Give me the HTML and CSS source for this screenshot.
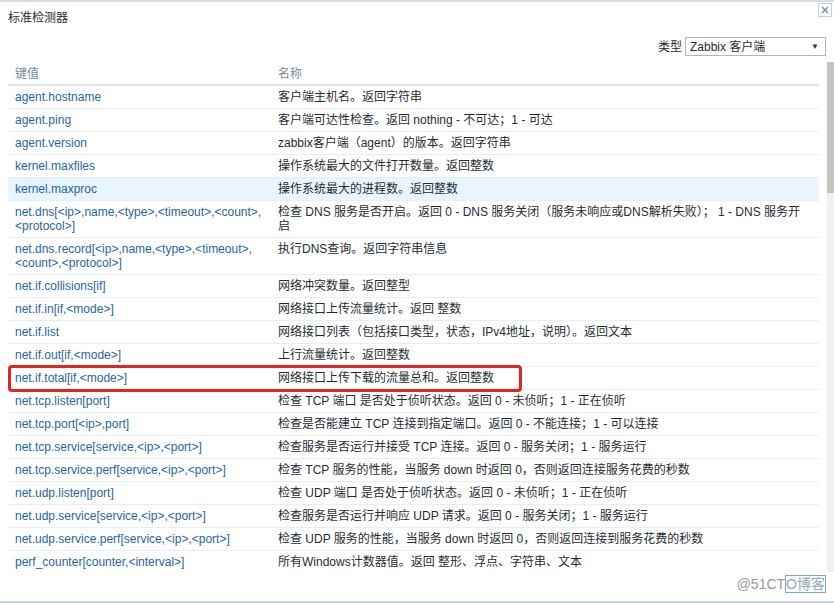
FILE: index.html
```html
<!DOCTYPE html>
<html lang="zh">
<head>
<meta charset="utf-8">
<title>标准检测器</title>
<link rel="stylesheet" href="styles.css">
</head>
<body>
<div class="dialog">
  <div class="dialog-head">
    <h1 class="title">标准检测器</h1>
    <button class="close" aria-label="关闭">
      <svg width="8" height="8" viewBox="0 0 8 8"><path d="M1 1L7 7M7 1L1 7" stroke="#8a9499" stroke-width="1.6" fill="none"/></svg>
    </button>
  </div>
  <div class="toolbar">
    <span class="label">类型</span>
    <div class="select"><span>Zabbix 客户端</span><span class="arrow">▼</span></div>
  </div>
  <div class="scroll-area">
    <div class="table-wrap">
      <table class="items">
        <colgroup><col class="c-key"><col class="c-name"></colgroup>
        <thead>
          <tr><th>键值</th><th>名称</th></tr>
        </thead>
        <tbody>
          <tr><td><a>agent.hostname</a></td><td>客户端主机名。返回字符串</td></tr>
          <tr><td><a>agent.ping</a></td><td>客户端可达性检查。返回 nothing - 不可达；1 - 可达</td></tr>
          <tr><td><a>agent.version</a></td><td>zabbix客户端（agent）的版本。返回字符串</td></tr>
          <tr><td><a>kernel.maxfiles</a></td><td>操作系统最大的文件打开数量。返回整数</td></tr>
          <tr class="hover"><td><a>kernel.maxproc</a></td><td>操作系统最大的进程数。返回整数</td></tr>
          <tr><td><a>net.dns[&lt;ip&gt;,name,&lt;type&gt;,&lt;timeout&gt;,&lt;count&gt;,<br>&lt;protocol&gt;]</a></td><td>检查 DNS 服务是否开启。返回 0 - DNS 服务关闭（服务未响应或DNS解析失败）； 1 - DNS 服务开<br>启</td></tr>
          <tr><td><a>net.dns.record[&lt;ip&gt;,name,&lt;type&gt;,&lt;timeout&gt;,<br>&lt;count&gt;,&lt;protocol&gt;]</a></td><td>执行DNS查询。返回字符串信息</td></tr>
          <tr><td><a>net.if.collisions[if]</a></td><td>网络冲突数量。返回整型</td></tr>
          <tr><td><a>net.if.in[if,&lt;mode&gt;]</a></td><td>网络接口上传流量统计。返回 整数</td></tr>
          <tr><td><a>net.if.list</a></td><td>网络接口列表（包括接口类型，状态，IPv4地址，说明）。返回文本</td></tr>
          <tr><td><a>net.if.out[if,&lt;mode&gt;]</a></td><td>上行流量统计。返回整数</td></tr>
          <tr><td><a>net.if.total[if,&lt;mode&gt;]</a></td><td>网络接口上传下载的流量总和。返回整数</td></tr>
          <tr><td><a>net.tcp.listen[port]</a></td><td>检查 TCP 端口 是否处于侦听状态。返回 0 - 未侦听；1 - 正在侦听</td></tr>
          <tr><td><a>net.tcp.port[&lt;ip&gt;,port]</a></td><td>检查是否能建立 TCP 连接到指定端口。返回 0 - 不能连接；1 - 可以连接</td></tr>
          <tr><td><a>net.tcp.service[service,&lt;ip&gt;,&lt;port&gt;]</a></td><td>检查服务是否运行并接受 TCP 连接。返回 0 - 服务关闭；1 - 服务运行</td></tr>
          <tr><td><a>net.tcp.service.perf[service,&lt;ip&gt;,&lt;port&gt;]</a></td><td>检查 TCP 服务的性能，当服务 down 时返回 0，否则返回连接服务花费的秒数</td></tr>
          <tr><td><a>net.udp.listen[port]</a></td><td>检查 UDP 端口 是否处于侦听状态。返回 0 - 未侦听；1 - 正在侦听</td></tr>
          <tr><td><a>net.udp.service[service,&lt;ip&gt;,&lt;port&gt;]</a></td><td>检查服务是否运行并响应 UDP 请求。返回 0 - 服务关闭；1 - 服务运行</td></tr>
          <tr><td><a>net.udp.service.perf[service,&lt;ip&gt;,&lt;port&gt;]</a></td><td>检查 UDP 服务的性能，当服务 down 时返回 0，否则返回连接到服务花费的秒数</td></tr>
          <tr class="last"><td><a>perf_counter[counter,&lt;interval&gt;]</a></td><td>所有Windows计数器值。返回 整形、浮点、字符串、文本</td></tr>
        </tbody>
      </table>
    </div>
    <div class="scrollbar"><div class="thumb"></div></div>
  </div>
  <div class="footer">
    <span class="watermark">@51CT<span class="boxed">O博客</span></span>
  </div>
</div>
<div class="annotation"></div>
</body>
</html>
```

FILE: styles.css
```css
html, body {
  margin: 0;
  padding: 0;
  background: #fff;
}
body {
  width: 834px;
  height: 603px;
  overflow: hidden;
  position: relative;
  font-family: "Liberation Sans", Arial, "Noto Sans CJK SC", sans-serif;
  font-size: 12px;
  color: #1f2c33;
}
.dialog {
  border-top: 2px solid #d9dcde;
  border-bottom: 2px solid #c9d3d9;
  height: 599px;
  display: flex;
  flex-direction: column;
}
.dialog-head {
  position: relative;
  padding: 9px 8px 6px;
  height: 14px;
}
.title {
  margin: 0;
  font-size: 12px;
  font-weight: normal;
  line-height: 14px;
  color: #1f2c33;
}
.close {
  position: absolute;
  top: 1px;
  right: 2px;
  width: 14px;
  height: 14px;
  padding: 0;
  border: 1px solid #b7d3ea;
  background: #fff;
  display: flex;
  align-items: center;
  justify-content: center;
}
.toolbar {
  display: flex;
  justify-content: flex-end;
  align-items: center;
  gap: 3px;
  margin-top: 6px;
  padding-right: 8px;
  height: 19px;
}
.label {
  line-height: 14px;
}
.select {
  box-sizing: border-box;
  width: 141px;
  height: 19px;
  border: 1px solid #aeb6ba;
  display: flex;
  align-items: center;
  justify-content: space-between;
  padding: 0 6px 0 4px;
  line-height: 14px;
}
.arrow {
  font-size: 8px;
  color: #333;
}
.scroll-area {
  margin-top: 6px;
  height: 510px;
  display: flex;
  gap: 8px;
}
.table-wrap {
  margin-left: 8px;
  width: 811px;
  overflow: hidden;
}
.items {
  width: 811px;
  border-collapse: collapse;
  table-layout: fixed;
}
.c-key { width: 263px; }
.items th {
  text-align: left;
  font-weight: normal;
  color: #768d99;
  padding: 5px 7px 3px;
  line-height: 14px;
  border-bottom: 2px solid #dfe4e7;
}
.items td {
  padding: 4px 7px;
  line-height: 14px;
  border-bottom: 1px solid #ebeef0;
  vertical-align: top;
  white-space: nowrap;
}
.items tr.last td {
  border-bottom: 0;
}
.items a {
  color: #1f65a6;
  text-decoration: none;
}
.items tr.hover td {
  background: #e8f5ff;
}
.scrollbar {
  width: 7px;
  background: #f0f0f0;
}
.thumb {
  height: 131px;
  background: #c3c3c3;
}
.footer {
  flex: 1;
  display: flex;
  justify-content: flex-end;
  align-items: flex-start;
  padding: 4px 8px 0 0;
}
.watermark {
  font-size: 14px;
  line-height: 16px;
  color: #9a9a9a;
}
.boxed {
  border: 1px solid #7fa9c6;
  color: #8fa7b8;
}
.annotation {
  position: absolute;
  left: 8px;
  top: 365px;
  width: 508px;
  height: 21px;
  border: 3px solid #e3241f;
  border-radius: 4px;
}
```
